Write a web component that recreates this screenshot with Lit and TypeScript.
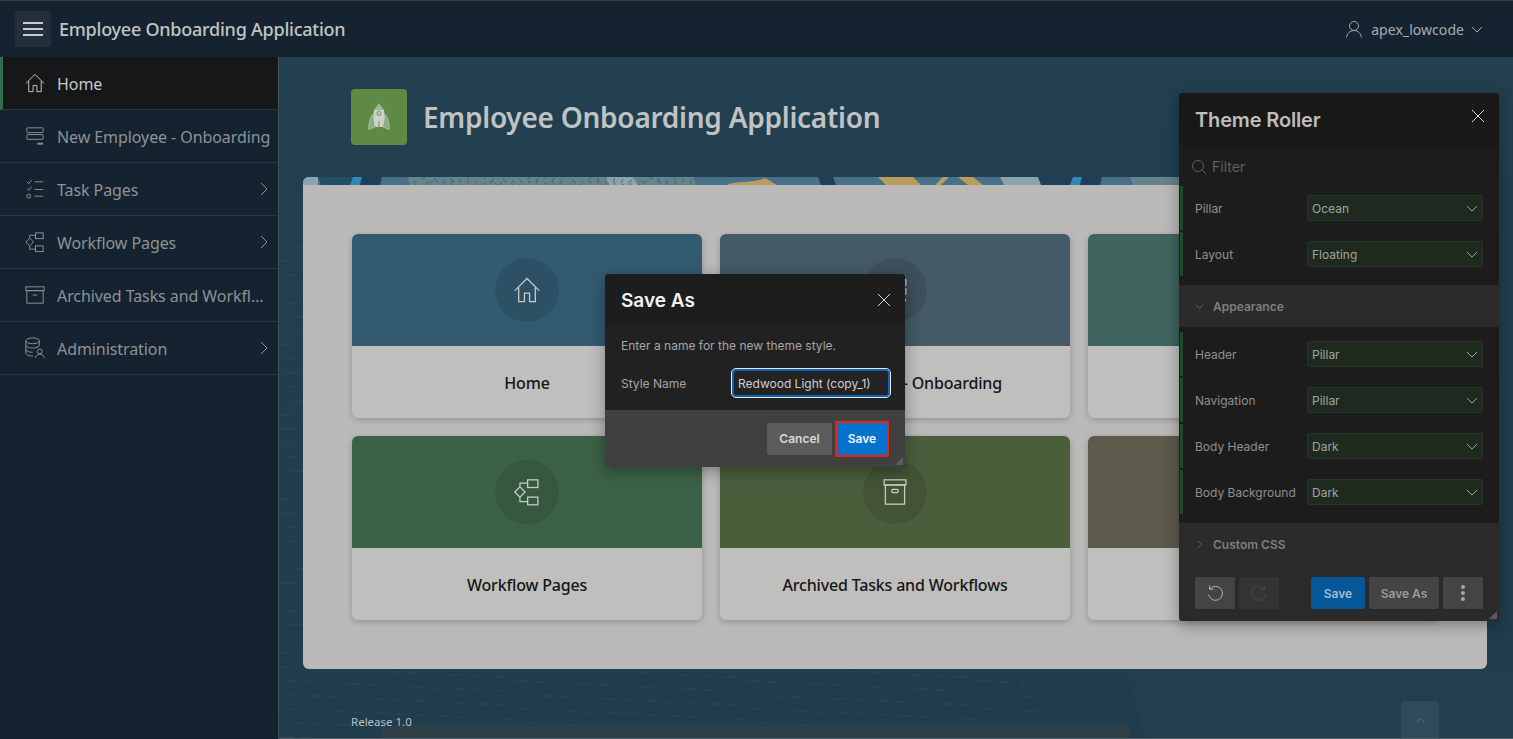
import { LitElement, html, css, svg } from "lit";
import { customElement } from "lit/decorators.js";

const icons: Record<string, unknown> = {
  home: svg`<path d="M3 13 12.5 3.5 22 13M6 10.5V21.5H10.5V15H14.5V21.5H19V10.5"/>`,
  form: svg`<rect x="4" y="4" width="17" height="5" rx="1"/><rect x="4" y="11" width="17" height="5" rx="1"/><path d="M15 20.5h6" stroke-width="2"/>`,
  tasks: svg`<path d="M4 5l2 2 3-4M12 5h9M4 12l2 2 3-4M12 13h9M12 20h9"/><circle cx="6" cy="20" r="2"/>`,
  flow: svg`<path d="M3 12.5 7 8.5 11 12.5 7 16.5ZM7 8.5V5.5H13M7 16.5V20H13"/><rect x="13" y="3" width="8" height="6"/><rect x="13" y="16.5" width="8" height="6"/>`,
  archive: svg`<rect x="3" y="4" width="19" height="4"/><rect x="4" y="8" width="17" height="13"/><path d="M10 12.5h5"/>`,
  admin: svg`<ellipse cx="10" cy="5" rx="7" ry="3"/><path d="M3 5V18C3 19.500 6 21 10.500 21M17 5V10M3 9.500C3 11.500 7 12.500 10 12.500S17 11.500 17 9.500M3 14C3 15.500 6 17 10 17"/><circle cx="17.500" cy="16" r="2.500"/><path d="M13 23C13 20.500 15 19 17.500 19S22 20.500 22 23"/>`,
  storage: svg`<rect x="4" y="3" width="17" height="4"/><rect x="5" y="7" width="15" height="15"/><rect x="10" y="10.500" width="5" height="2.500" rx="1"/>`,
};

const chevron = (up = false) =>
  html`<svg class="chev" viewBox="0 0 14 8"><path d=${up ? "M1 7 7 1 13 7" : "M1 1 7 7 13 1"}/></svg>`;
const close = html`<svg class="close" viewBox="0 0 14 14"><path d="M1 1 13 13M13 1 1 13"/></svg>`;

const menu = [
  { label: "Home", icon: "home", active: true },
  { label: "New Employee - Onboarding", icon: "form" },
  { label: "Task Pages", icon: "tasks", more: true },
  { label: "Workflow Pages", icon: "flow", more: true },
  { label: "Archived Tasks and Workflows", icon: "archive" },
  { label: "Administration", icon: "admin", more: true },
];

const cards = [
  { label: "Home", icon: "home", color: "#335b70" },
  { label: "New Employee - Onboarding", icon: "form", color: "#445a66" },
  { label: "Task Pages", icon: "tasks", color: "#3f645e" },
  { label: "Workflow Pages", icon: "flow", color: "#3b6246" },
  { label: "Archived Tasks and Workflows", icon: "storage", color: "#4b5e3c" },
  { label: "Administration", icon: "admin", color: "#5e5a4c" },
];

// slices of the hero artwork that shows above the region, [from, to, colour, slant]
const stripe: [number, number, string, number][] = [
  [0, 1184, "#47708a", 0],
  [0, 15, "#8ba3ae", 0],
  [15, 50, "#244d66", 3],
  [50, 59, "#2d8bb8", -3],
  [59, 79, "#1e3f55", -2],
  [104, 390, "#64838f", 3],
  [302, 330, "#8ba3ae", 5],
  [515, 530, "#1e3f55", 3],
  [575, 610, "#b99d5a", 8],
  [640, 646, "#b99d5a", -8],
  [655, 670, "#b99d5a", 10],
  [697, 735, "#8ba3ae", 4],
  [735, 770, "#1e3f55", 3],
  [770, 779, "#2d8bb8", -3],
  [779, 799, "#1e3f55", -2],
  [827, 1184, "#64838f", 3],
];

// little twigs that make the textured part of the artwork look busy
const twigs = Array.from({ length: 70 }, (_, i) => {
  const x = 106 + ((i * 43) % 284);
  const dir = (i * 7) % 5 - 2;
  return `M${x} ${(i * 3) % 8}l${dir * 2} ${2 + (i % 4)}`;
}).join("");

// dashes of the ocean backdrop, only where the region does not cover them
const waves = Array.from({ length: 36 * 41 }, (_, i) => {
  const col = i % 36;
  const row = Math.floor(i / 36);
  const x = col * 21 + (row * 37) % 17;
  const y = row * 14 + (col * 23) % 11;
  return { x, y, w: 4 + (col * 7 + row * 3) % 11 };
}).filter((d) => (d.x < 22 && d.y > 63) || d.y > 494);

const field = (label: string, value: string) => html`
  <div class="row">
    <span class="row-label">${label}</span>
    <div class="select"><span>${value}</span>${chevron()}</div>
  </div>
`;

@customElement("app-root")
class AppRoot extends LitElement {
  static styles = css`
    :host {
      display: block;
      position: relative;
      height: 100vh;
      overflow: hidden;
      font-family: "Noto Sans", sans-serif;
      background: #14232f;
    }
    svg {
      display: block;
      fill: none;
      stroke: currentColor;
      stroke-width: 1;
    }
    .header {
      height: 56px;
      border-top: 1px solid #3d3a3b;
      display: flex;
      align-items: center;
      padding: 0 30px 0 15px;
      background: #14232f;
      color: #c2c4c5;
    }
    .burger {
      width: 36px;
      height: 36px;
      border-radius: 3px;
      background: #232f3a;
      display: flex;
      flex-direction: column;
      justify-content: center;
      align-items: center;
      gap: 4px;
    }
    .burger i {
      width: 20px;
      height: 2px;
      background: #c9cbcd;
    }
    .app-title {
      margin-left: 8px;
      font-size: 18px;
      font-weight: 500;
      letter-spacing: -0.24px;
      flex: 1;
    }
    .user {
      display: flex;
      align-items: center;
      font-size: 14px;
      letter-spacing: 0.05px;
      color: #a9adb0;
    }
    .user .avatar {
      width: 18px;
      height: 18px;
      margin-right: 8px;
    }
    .chev {
      width: 12px;
      height: 7px;
    }
    .user .chev {
      margin-left: 7px;
      color: #c0c3c5;
    }
    .layout {
      display: flex;
      height: 682px;
    }
    .nav {
      width: 278px;
      flex: none;
      background: #14232f;
      border-right: 1px solid #44525c;
    }
    .nav-item {
      height: 52px;
      box-sizing: content-box;
      border-bottom: 1px solid #2a3843;
      display: flex;
      align-items: center;
      padding: 0 6px 0 23px;
      color: #8d9296;
      font-size: 16px;
      letter-spacing: -0.08px;
    }
    .nav-item.active {
      background: #161719;
      color: #c8c9ca;
      border-left: 3px solid #2c6e4e;
      padding-left: 20px;
    }
    .nav-item .ico {
      width: 24px;
      height: 24px;
      flex: none;
      margin-right: 10px;
    }
    .nav-item .lab {
      flex: 1;
      padding-top: 2px;
      white-space: nowrap;
      overflow: hidden;
      text-overflow: ellipsis;
    }
    .nav-item .chev {
      width: 14px;
      height: 8px;
      transform: rotate(-90deg);
      flex: none;
      margin-right: 1px;
    }
    .main {
      flex: 1;
      position: relative;
      overflow: hidden;
      padding: 0 26px 0 24px;
      background: linear-gradient(180deg, #22404f 0%, #203d4d 100%);
    }
    .main::after {
      content: "";
      position: absolute;
      left: 0;
      right: 0;
      bottom: 0;
      height: 1px;
      background: #52626c;
    }
    .water {
      position: absolute;
      left: 0;
      top: 120px;
      width: 760px;
      height: 562px;
      color: #2b4a5b;
    }
    .seabed {
      position: absolute;
      left: 102px;
      bottom: 0;
      width: 748px;
      height: 14px;
      background: #2e3f47;
    }
    .deep {
      position: absolute;
      left: 846px;
      right: 0;
      top: 612px;
      bottom: 0;
      background: #243e4d;
      clip-path: polygon(0 0, 100% 0, 100% 100%, 20px 100%);
    }
    .hero {
      position: relative;
      display: flex;
      align-items: center;
      height: 120px;
      padding-left: 48px;
      gap: 16px;
    }
    .hero-icon {
      width: 56px;
      height: 56px;
      border-radius: 4px;
      background: #5f8a45;
      display: flex;
      align-items: center;
      justify-content: center;
    }
    .hero-icon svg {
      width: 22px;
      height: 28px;
    }
    .hero h1 {
      margin: 0;
      font-size: 28px;
      font-weight: 600;
      letter-spacing: -0.26px;
      color: #c0c3c5;
    }
    .region {
      position: relative;
      border-radius: 6px;
      overflow: hidden;
      background: #bbbab8;
      height: 492px;
    }
    .strip {
      height: 8px;
      width: 100%;
    }
    .grid {
      display: grid;
      grid-template-columns: repeat(3, 350px);
      gap: 18px;
      padding: 49px 0 0 49px;
    }
    .card {
      height: 184px;
      border-radius: 6px;
      overflow: hidden;
      background: #bfbfbe;
      box-shadow: 0 2px 6px rgba(0, 0, 0, 0.22);
      display: flex;
      flex-direction: column;
    }
    .card-top {
      height: 112px;
      display: flex;
      align-items: center;
      justify-content: center;
    }
    .disc {
      width: 64px;
      height: 64px;
      border-radius: 50%;
      background: rgba(0, 0, 0, 0.1);
      display: flex;
      align-items: center;
      justify-content: center;
      color: #c8cbc9;
    }
    .disc svg {
      width: 32px;
      height: 32px;
    }
    .card-label {
      flex: 1;
      display: flex;
      align-items: center;
      justify-content: center;
      padding-top: 2px;
      font-size: 16px;
      font-weight: 500;
      letter-spacing: -0.18px;
      color: #161616;
    }
    .footer {
      position: relative;
      display: flex;
      justify-content: space-between;
      align-items: flex-end;
      height: 70px;
      padding: 0 48px;
      font-size: 11.5px;
      color: #b9bfc3;
    }
    .footer span {
      margin-bottom: 10px;
    }
    .top-btn {
      width: 38px;
      height: 38px;
      border-radius: 3px 3px 0 0;
      background: #304a5b;
      color: #84959f;
      display: flex;
      align-items: center;
      justify-content: center;
    }
    .top-btn .chev {
      width: 9px;
      height: 5px;
    }

    .panel,
    .dialog {
      position: absolute;
      font-family: Inter, sans-serif;
      border-radius: 4px;
      overflow: hidden;
      box-shadow: 0 4px 16px rgba(0, 0, 0, 0.35);
    }
    .close {
      width: 14px;
      height: 14px;
      color: #d5d5d5;
    }
    .panel {
      left: 1179px;
      top: 93px;
      width: 320px;
      height: 528px;
      background: #1c1c1c;
      color: #8f8f8f;
    }
    .panel-head {
      height: 53px;
      background: #181818;
      display: flex;
      align-items: center;
      justify-content: space-between;
      padding: 0 14px 0 16px;
    }
    .panel-head h2 {
      margin: 0;
      font-size: 20px;
      font-weight: 600;
      letter-spacing: -0.15px;
      color: #bdbdbd;
    }
    .panel-head .close {
      margin-top: -8px;
    }
    .filter {
      height: 39px;
      box-sizing: border-box;
      padding: 2px 0 0 12px;
      display: flex;
      align-items: center;
      gap: 5px;
      font-size: 14px;
      color: #5e5e5e;
    }
    .filter svg {
      width: 16px;
      height: 16px;
    }
    .row {
      height: 46px;
      display: flex;
      align-items: center;
      justify-content: space-between;
      padding: 0 16px;
      font-size: 12px;
      position: relative;
    }
    .row::before {
      content: "";
      position: absolute;
      left: 1px;
      top: 1px;
      bottom: 1px;
      width: 3px;
      background: #1f4a2c;
    }
    .select {
      width: 176px;
      height: 26px;
      box-sizing: border-box;
      border: 1px solid #25352a;
      border-radius: 2px;
      background: #1f2a1f;
      color: #a0a5a0;
      display: flex;
      align-items: center;
      justify-content: space-between;
      padding: 0 4px;
    }
    .select .chev {
      width: 12px;
      height: 7px;
      color: #b5bab5;
    }
    .rows {
      padding-bottom: 8px;
    }
    .rows.first {
      padding-top: 4px;
    }
    .section {
      height: 42px;
      background: #2b2b2b;
      display: flex;
      align-items: center;
      gap: 9px;
      padding-left: 16px;
      font-size: 12px;
      font-weight: 600;
      color: #7e7e7e;
    }
    .section .chev {
      width: 9px;
      height: 5px;
    }
    .section .chev.side {
      transform: rotate(-90deg);
    }
    .panel-foot {
      height: 56px;
      box-sizing: border-box;
      padding: 12px 16px;
      background: #2a2a2a;
      display: flex;
      gap: 4px;
    }
    .btn {
      height: 32px;
      flex: none;
      border-radius: 2px;
      display: flex;
      align-items: center;
      justify-content: center;
      font-size: 12px;
      font-weight: 600;
      background: #444;
      color: #9a9a9a;
    }
    .btn.square {
      width: 40px;
      color: #b0b0b0;
    }
    .btn.square svg {
      width: 18px;
      height: 18px;
    }
    .btn.dim {
      background: #343434;
      color: #4a4a4a;
    }
    .btn.primary {
      width: 54px;
      margin-left: 28px;
      background: #06569a;
      color: #a2bbd2;
    }
    .btn.save-as {
      width: 70px;
    }
    .dots {
      display: flex;
      flex-direction: column;
      gap: 2px;
    }
    .dots i {
      width: 4px;
      height: 4px;
      border-radius: 50%;
      background: #a5a5a5;
    }
    .grip {
      position: absolute;
      right: 2px;
      bottom: 2px;
      width: 0;
      height: 0;
      border-left: 8px solid transparent;
      border-bottom: 8px solid #5c5c5c;
    }

    .dialog {
      left: 605px;
      top: 274px;
      width: 300px;
      height: 193px;
      background: #212121;
      color: #a5a5a5;
    }
    .dialog-head {
      height: 52px;
      background: #1d1d1d;
      display: flex;
      align-items: center;
      justify-content: space-between;
      padding: 0 14px 0 16px;
    }
    .dialog-head h2 {
      margin: 0;
      font-size: 19px;
      font-weight: 600;
      color: #f2f2f2;
    }
    .dialog-body {
      height: 84px;
      padding: 12px 16px 0;
      box-sizing: border-box;
      font-size: 12px;
    }
    .dialog-row {
      display: flex;
      align-items: center;
      justify-content: space-between;
      margin: 15px -2px 0 0;
    }
    .input {
      width: 160px;
      height: 30px;
      box-sizing: border-box;
      border: 1px solid #e8e8e8;
      box-shadow: inset 0 0 0 2px #0b62b8;
      border-radius: 5px;
      background: #232323;
      color: #cfcfcf;
      display: flex;
      align-items: center;
      padding-left: 6px;
      white-space: nowrap;
    }
    .dialog-foot {
      height: 57px;
      background: #404040;
      display: flex;
      justify-content: flex-end;
      align-items: center;
      gap: 5px;
      padding: 0 18px 0 0;
    }
    .cancel {
      width: 65px;
      background: #5c5c5c;
      color: #d8d8d8;
    }
    .save {
      width: 50px;
      height: 32px;
      border-radius: 0;
      background: #0572ce;
      color: #f2f6fa;
      outline: 2px solid #f0210f;
    }
  `;

  private icon(name: string, cls = "") {
    return html`<svg class=${cls} viewBox="0 0 25 25">${icons[name]}</svg>`;
  }

  render() {
    return html`
      <div class="header">
        <div class="burger"><i></i><i></i><i></i></div>
        <div class="app-title">Employee Onboarding Application</div>
        <div class="user">
          <svg class="avatar" viewBox="0 0 18 18">
            <circle cx="9" cy="6" r="4.500" />
            <path d="M1.500 17.500C2 13.500 5 10.500 9 10.500S16 13.500 16.500 17.500" />
          </svg>
          apex_lowcode ${chevron()}
        </div>
      </div>
      <div class="layout">
        <nav class="nav">
          ${menu.map(
            (m) => html`
              <div class="nav-item ${m.active ? "active" : ""}">
                ${this.icon(m.icon, "ico")}
                <span class="lab">${m.label}</span>
                ${m.more ? chevron() : ""}
              </div>
            `
          )}
        </nav>
        <main class="main">
          <div class="deep"></div>
          <svg class="water" viewBox="0 0 760 562">
            ${waves.map((d) => svg`<path d="M${d.x} ${d.y}h${d.w}" />`)}
          </svg>
          <div class="seabed"></div>
          <div class="hero">
            <div class="hero-icon">
              <svg viewBox="0 0 22 28" stroke="none">
                <path d="M5 11C2 15 .5 20 .8 26.500L7 24ZM17 11C20 15 21.500 20 21.200 26.500L15 24Z" fill="#8dab7e" stroke="#a5bf98" />
                <path d="M6 7C5 12 5.500 19 7.500 24H14.500C16.500 19 17 12 16 7Z" fill="#cfd1cd" stroke="none" />
                <path d="M11 0 6 7H16Z" fill="#9fb893" stroke="none" />
                <circle cx="11" cy="10.500" r="2" fill="#cfd1cd" stroke="#6f8f5c" />
                <path d="M11 18V27" stroke="#6f8f5c" />
              </svg>
            </div>
            <h1>Employee Onboarding Application</h1>
          </div>
          <section class="region">
            <svg class="strip" viewBox="0 0 1184 8" preserveAspectRatio="none">
              ${stripe.map(
                ([a, b, c, s]) => svg`<path d="M${a} 0H${b}L${b + s} 8H${a + s}Z" fill=${c} stroke="none" />`
              )}
              <path d=${twigs} stroke="#3a5c6e" stroke-width=".8" />
              <path d="M424 8C432 3 450 7 462 1L474 8Z" fill="#b99d5a" stroke="none" />
            </svg>
            <div class="grid">
              ${cards.map(
                (c) => html`
                  <div class="card">
                    <div class="card-top" style="background:${c.color}">
                      <div class="disc">${this.icon(c.icon)}</div>
                    </div>
                    <div class="card-label">${c.label}</div>
                  </div>
                `
              )}
            </div>
          </section>
          <div class="footer">
            <span>Release 1.0</span>
            <div class="top-btn">${chevron(true)}</div>
          </div>
        </main>
      </div>

      <aside class="panel">
        <div class="panel-head"><h2>Theme Roller</h2>${close}</div>
        <div class="filter">
          <svg viewBox="0 0 16 16"><circle cx="7" cy="7" r="5.500" /><path d="M11 11 15 15" /></svg>
          Filter
        </div>
        <div class="rows">${field("Pillar", "Ocean")}${field("Layout", "Floating")}</div>
        <div class="section">${chevron()} Appearance</div>
        <div class="rows first">
          ${field("Header", "Pillar")}${field("Navigation", "Pillar")}
          ${field("Body Header", "Dark")}${field("Body Background", "Dark")}
        </div>
        <div class="section">
          <svg class="chev side" viewBox="0 0 14 8"><path d="M1 1 7 7 13 1" /></svg> Custom CSS
        </div>
        <div class="panel-foot">
          <div class="btn square">
            <svg viewBox="0 0 18 18"><path d="M3.500 1.500V5.200H7.500M4 5A7 7 0 1 1 2.600 10.500" /></svg>
          </div>
          <div class="btn square dim">
            <svg viewBox="0 0 18 18"><path d="M14.500 1.500V5.200H10.500M14 5A7 7 0 1 0 15.400 10.500" /></svg>
          </div>
          <div class="btn primary">Save</div>
          <div class="btn save-as">Save As</div>
          <div class="btn square"><div class="dots"><i></i><i></i><i></i></div></div>
        </div>
        <div class="grip"></div>
      </aside>

      <div class="dialog">
        <div class="dialog-head"><h2>Save As</h2>${close}</div>
        <div class="dialog-body">
          Enter a name for the new theme style.
          <div class="dialog-row">
            <span>Style Name</span>
            <div class="input">Redwood Light (copy_1)</div>
          </div>
        </div>
        <div class="dialog-foot">
          <div class="btn cancel">Cancel</div>
          <div class="btn save">Save</div>
        </div>
        <div class="grip"></div>
      </div>
    `;
  }
}
